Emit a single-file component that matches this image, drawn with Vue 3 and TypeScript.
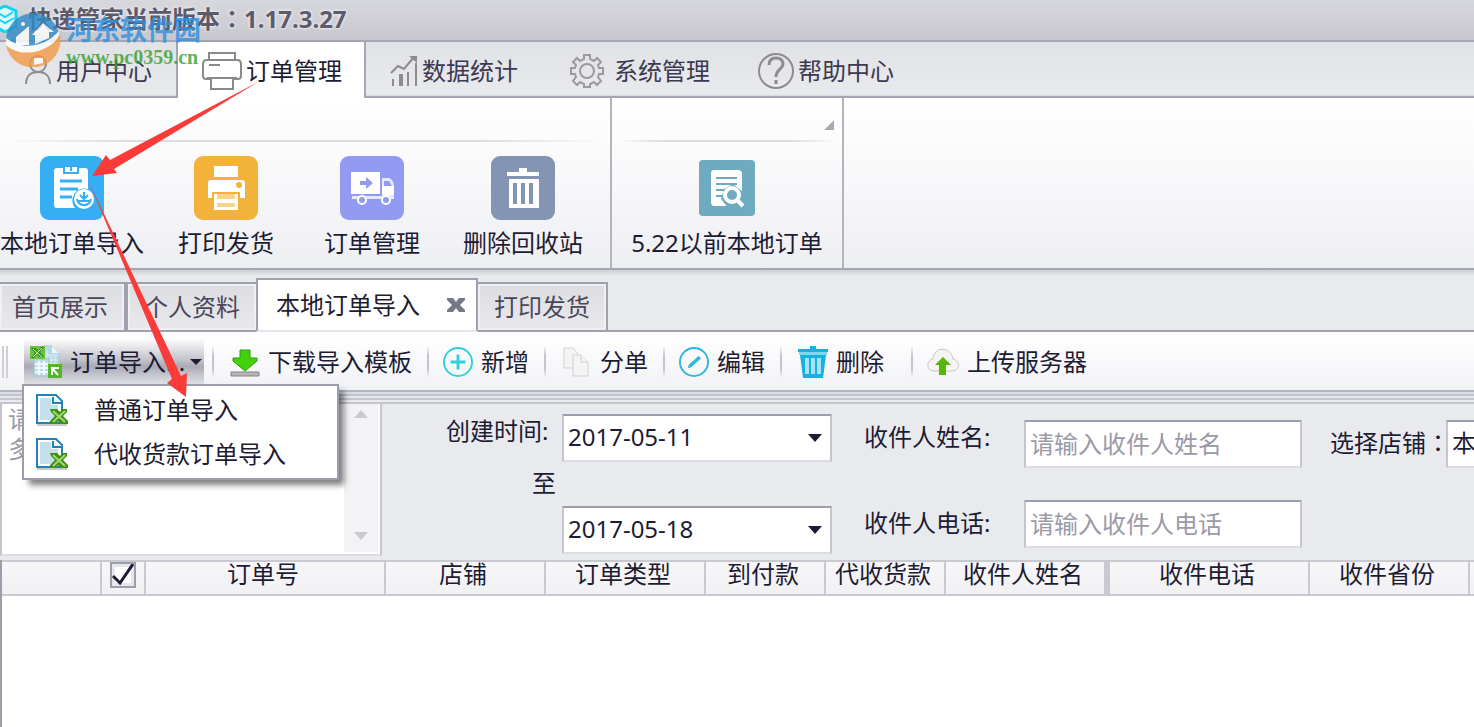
<script setup lang="ts">
import { ref } from 'vue'

interface Column {
  title: string
  cls: string
}

const mainTabs = [
  { id: 'user', label: '用户中心' },
  { id: 'order', label: '订单管理' },
  { id: 'stats', label: '数据统计' },
  { id: 'system', label: '系统管理' },
  { id: 'help', label: '帮助中心' },
]
const activeMain = ref('order')

const columns: Column[] = [
  { title: '订单号', cls: 'w240' },
  { title: '店铺', cls: 'w160' },
  { title: '订单类型', cls: 'w160' },
  { title: '到付款', cls: 'w120' },
  { title: '代收货款', cls: 'w120' },
  { title: '收件人姓名', cls: 'w164' },
  { title: '收件电话', cls: 'w200' },
  { title: '收件省份', cls: 'w160' },
]

const importMenu = ['普通订单导入', '代收货款订单导入']
const startDate = ref('2017-05-11')
const endDate = ref('2017-05-18')
const receiverName = ref('')
const receiverPhone = ref('')
const orderNumbers = ref('')
const allChecked = ref(true)
</script>

<template>
  <div class="app">
    <header class="titlebar">
      <svg class="app-icon" viewBox="0 0 18 28" aria-hidden="true">
        <path d="M-6 6 L5 1 L16 6 L16 21 L5 27 L-6 21Z" fill="#dffaff" stroke="#10d4f4" stroke-width="3" />
        <path d="M-2 8 L5 12 L13 7 M-2 14 L5 18 L14 13" fill="none" stroke="#18d6f2" stroke-width="2" />
      </svg>
      <h1>快递管家当前版本<span class="colon">：</span>1.17.3.27</h1>
    </header>

    <nav class="main-tabs">
      <button
        v-for="tab in mainTabs"
        :key="tab.id"
        type="button"
        :class="['main-tab', tab.id, { active: tab.id === activeMain }]"
        @click="activeMain = tab.id"
      >
        <svg v-if="tab.id === 'user'" class="nav-icon" viewBox="0 0 28 40" width="28" height="40" fill="none" stroke="#8c8c8e" stroke-width="2">
          <circle cx="14" cy="13" r="8" />
          <path d="M2 33 C2 25 7 21 14 21 C21 21 26 25 26 33" />
        </svg>
        <svg v-else-if="tab.id === 'order'" class="nav-icon" viewBox="0 0 40 40" width="40" height="40" fill="none" stroke="#8a8a8a" stroke-width="2">
          <path d="M7 9 V2 H33 V9" />
          <path d="M9 28 H4 C2 28 1 27 1 25 V13 C1 10 2 9 5 9 H35 C38 9 39 10 39 13 V25 C39 27 38 28 36 28 H31" />
          <path d="M5 27 H35 M9 27 V38 H31 V27" />
          <path d="M7 14 H18" />
        </svg>
        <svg v-else-if="tab.id === 'stats'" class="nav-icon" viewBox="0 0 28 40" width="28" height="40" fill="none" stroke="#8c8c8e" stroke-width="2">
          <path d="M3 35 V28 M10 35 V23 M12 35 V23 M18 35 V21 M26 35 V12" />
          <path d="M1 22 L8 15 L14 18 L24 6" />
          <path d="M19 5 H27 V12Z" fill="#8c8c8e" stroke="none" />
        </svg>
        <svg v-else-if="tab.id === 'system'" class="nav-icon" viewBox="0 0 40 40" width="40" height="40" fill="none" stroke="#9b9b9d" stroke-width="2">
          <circle cx="17" cy="20" r="7" />
          <path d="M14 4 H20 V8 L24 10 L27 7 L31 11 L28 14 L29 17 H33 V23 H29 L28 26 L31 30 L27 34 L24 31 L20 33 V36 H14 V33 L10 31 L7 34 L3 30 L6 26 L5 23 H1 V17 H5 L6 14 L3 11 L7 7 L10 10 L14 8Z" />
        </svg>
        <svg v-else class="nav-icon" viewBox="0 0 36 40" width="36" height="40" fill="none" stroke="#8c8c8e" stroke-width="2">
          <circle cx="18" cy="20" r="17" />
          <path d="M11 14 C11 9 14 7 18 7 C22 7 25 9 25 13 C25 18 18 18 18 26" stroke-width="3" />
          <path d="M18 29 V33" stroke-width="3" />
        </svg>
        <span>{{ tab.label }}</span>
      </button>
    </nav>

    <section class="ribbon">
      <div class="group orders">
        <button type="button" class="ribbon-btn">
          <svg viewBox="0 0 64 64" width="64" height="64">
            <rect width="64" height="64" rx="9" fill="#36aef3" />
            <path d="M17 12 H23 V18 H39 V12 H45 Q48 12 48 15 V33 A12 12 0 0 0 35 52 H17 Q14 52 14 49 V15 Q14 12 17 12Z" fill="#fff" />
            <path d="M25 11 H37 V16 H25Z" fill="#fff" />
            <path d="M31 11 V15" stroke="#36aef3" stroke-width="2" />
            <path d="M20 25 H42 M20 33 H38 M20 41 H32" stroke="#36aef3" stroke-width="3" />
            <circle cx="44" cy="43" r="10" fill="#fff" />
            <path d="M44 36 V42 M40 39 L44 43 L48 39 M37 43 Q38 49 44 49 Q50 49 51 43 M37 45 H51" fill="none" stroke="#36aef3" stroke-width="2" />
          </svg>
          <span>本地订单导入</span>
        </button>
        <button type="button" class="ribbon-btn">
          <svg viewBox="0 0 64 64" width="64" height="64">
            <rect width="64" height="64" rx="9" fill="#f3b33b" />
            <path d="M20 10 H44 V21 H20Z M17 24 H48 Q51 24 51 27 V42 H46 V36 H18 V42 H14 V27 Q14 24 17 24Z" fill="#fff" />
            <path d="M20 38 H44 V54 H20Z" fill="#fff" />
            <path d="M23 38 H41 V43 H23Z M23 47 H41 V51 H23Z" fill="#f8d38d" />
            <circle cx="45" cy="29" r="3" fill="#f3b33b" />
          </svg>
          <span>打印发货</span>
        </button>
        <button type="button" class="ribbon-btn">
          <svg viewBox="0 0 64 64" width="64" height="64">
            <rect width="64" height="64" rx="9" fill="#929af2" />
            <path d="M11 16 H40 V38 H11Z" fill="#fff" />
            <path d="M42 22 H49 Q54 24 54 31 V43 H12 V40 H42Z" fill="#e6e8ff" />
            <path d="M42 30 H54 V39 H42Z" fill="#fff" />
            <path d="M44 25 H49 L52 30 H44Z" fill="#929af2" />
            <path d="M20 25 H26 V21 L33 27 L26 33 V29 H20Z" fill="#929af2" />
            <circle cx="22" cy="44" r="4" fill="#929af2" stroke="#fff" stroke-width="2" />
            <circle cx="46" cy="44" r="4" fill="#929af2" stroke="#fff" stroke-width="2" />
          </svg>
          <span>订单管理</span>
        </button>
        <button type="button" class="ribbon-btn">
          <svg viewBox="0 0 64 64" width="64" height="64">
            <rect width="64" height="64" rx="9" fill="#8494b3" />
            <path d="M28 12 H36 V16 H48 V20 H16 V16 H28Z" fill="#fff" />
            <path d="M18 23 H48 V52 H18Z" fill="#fff" />
            <path d="M24 27 V48 M32 27 V48 M40 27 V48" stroke="#8494b3" stroke-width="4" />
          </svg>
          <span>删除回收站</span>
        </button>
      </div>
      <div class="group local">
        <button type="button" class="ribbon-btn">
          <svg viewBox="0 0 64 64" width="64" height="64">
            <rect x="4" y="4" width="56" height="56" rx="4" fill="#6eaac0" />
            <path d="M19 14 H43 Q47 14 47 18 V50 H19 Q16 50 16 46 V17 Q16 14 19 14Z" fill="#fff" />
            <path d="M21 22 H42 M21 28 H42 M21 34 H30 M21 40 H28" stroke="#6eaac0" stroke-width="2" />
            <path d="M47 35 V53 H34 L26 43 L29 33 L38 28Z" fill="#6eaac0" />
            <circle cx="37" cy="39" r="7" fill="#6eaac0" stroke="#fff" stroke-width="4" />
            <path d="M42 44 L48 50" stroke="#fff" stroke-width="4" />
          </svg>
          <span>5.22以前本地订单</span>
        </button>
        <i class="corner"></i>
      </div>
    </section>

    <nav class="doc-tabs">
      <button type="button" class="doc-tab">首页展示</button>
      <button type="button" class="doc-tab">个人资料</button>
      <div class="doc-tab current">
        <button type="button" class="doc-label">本地订单导入</button>
        <button type="button" class="close" aria-label="关闭">
          <svg viewBox="0 0 20 16" width="20" height="16"><path d="M1 1 H7 L10 5 L13 1 H19 V3 L14 8 L19 13 V15 H13 L10 11 L7 15 H1 V13 L6 8 L1 3Z" fill="#77778a" /></svg>
        </button>
      </div>
      <button type="button" class="doc-tab">打印发货</button>
    </nav>

    <div class="toolbar">
      <i class="grip"></i>
      <div class="import">
        <button type="button" class="import-btn" aria-haspopup="menu" aria-expanded="true">
          <svg viewBox="0 0 32 34" width="32" height="34">
            <path d="M13 1 H22 L29 8 V26 H13Z" fill="#b9d8e6" stroke="#a9c7d6" />
            <path d="M22 1 V8 H29Z" fill="#eef7fb" />
            <path d="M17 5 V22 M21 10 V22 M25 10 V22 M14 10 H28 M14 15 H28 M14 19 H28" stroke="#dceef5" />
            <path d="M4 14 H19 V31 H4Z" fill="#bcdce9" stroke="#9fc4d3" />
            <path d="M5 19 H18 M5 23 H18 M5 27 H18 M9 16 V30 M14 16 V30" stroke="#eef8fc" stroke-width="2" />
            <path d="M0 1 H15 V14 H0Z" fill="#6cc043" />
            <path d="M1 3 H6 L8 6 L11 2 H14 L10 7 L14 12 H9 L7 9 L4 13 H1 L5 8Z" fill="#2f8f17" />
            <path d="M3 4 L12 12 M12 3 L3 12" stroke="#d5f0c4" stroke-width="1" />
            <path d="M18 19 H32 V33 H18Z" fill="#52b52c" />
            <path d="M22 30 V23 H29 M22 23 L28 30" fill="none" stroke="#fff" stroke-width="2" />
          </svg>
          <span>订单导入...</span>
          <i class="caret"></i>
        </button>
        <ul class="menu" role="menu">
          <li v-for="item in importMenu" :key="item" role="none">
            <button type="button" role="menuitem">
              <svg viewBox="0 0 32 32" width="32" height="32">
                <path d="M1 1 H20 L26 7 V29 H1Z" fill="#fff" stroke="#2482ba" stroke-width="2" />
                <path d="M4 4 H15 V11 H22 V26 H4Z" fill="#c4e0ec" />
                <path d="M17 3 V9 H25" fill="#e7f4fb" stroke="#2482ba" stroke-width="2" />
                <path d="M1 31 H31" stroke="#c9c9cc" stroke-width="2" />
                <path d="M14 15 H21 L24 18 L26 15 H31 V18 L27 22 L32 27 V30 H25 L22 27 L20 30 H14 V27 L19 22 L15 18Z" fill="#3d9011" />
                <path d="M17 17 L29 28 M29 17 L17 28" stroke="#a4d878" stroke-width="2" />
              </svg>
              <span>{{ item }}</span>
            </button>
          </li>
        </ul>
      </div>
      <i class="sep"></i>
      <button type="button" class="tool">
        <svg viewBox="0 0 30 30" width="30" height="30">
          <path d="M10 3 H20 V11 H27 V14 L15 24 L3 14 V11 H10Z" fill="#42d20c" stroke="#2d9c08" />
          <path d="M1 25 H29 V29 H1Z" fill="#b5b5b5" stroke="#858585" />
        </svg>
        <span>下载导入模板</span>
      </button>
      <i class="sep"></i>
      <button type="button" class="tool">
        <svg viewBox="0 0 32 32" width="30" height="30" fill="none" stroke="#2dd2de">
          <circle cx="16" cy="16" r="15" stroke-width="2" />
          <path d="M16 8 V24 M8 16 H24" stroke-width="3" />
        </svg>
        <span>新增</span>
      </button>
      <i class="sep"></i>
      <button type="button" class="tool wide">
        <svg viewBox="0 0 28 32" width="28" height="32" fill="#f4f4f4" stroke="#d2d2d4" stroke-width="1">
          <path d="M2 2 H11 L16 8 V22 H2Z" />
          <path d="M11 9 H19 L26 16 V30 H11Z" />
          <path d="M19 9 V16 H26" />
        </svg>
        <span>分单</span>
      </button>
      <i class="sep"></i>
      <button type="button" class="tool">
        <svg viewBox="0 0 32 32" width="30" height="30" fill="none" stroke="#2bb5e0">
          <circle cx="16" cy="16" r="15" stroke-width="2" />
          <path d="M10 22 L11 19 L21 10 L23 12 L13 21Z" fill="#2bb5e0" />
        </svg>
        <span>编辑</span>
      </button>
      <i class="sep"></i>
      <button type="button" class="tool delete">
        <svg viewBox="0 0 30 32" width="30" height="32">
          <path d="M12 0 H18 V3 H30 V6 H0 V3 H12Z" fill="#16b1de" />
          <path d="M1 6 H29 V9 H1Z" fill="#7fd6ef" />
          <path d="M2 9 H28 L25 32 H5Z" fill="#16b1de" />
          <path d="M9 12 V28 M15 12 V28 M21 12 V28" stroke="#a5e2f4" stroke-width="4" />
        </svg>
        <span>删除</span>
      </button>
      <i class="sep"></i>
      <button type="button" class="tool">
        <svg viewBox="0 0 32 30" width="32" height="30">
          <path d="M7 24 C-1 24 -1 13 6 12 C7 -1 24 -1 26 12 C34 14 33 24 25 24Z" fill="#f4f4f5" stroke="#c6c6c8" />
          <path d="M16 10 L24 18 H19 V28 H12 V18 H8Z" fill="#57b50b" />
        </svg>
        <span>上传服务器</span>
      </button>
    </div>

    <section class="filters">
      <div class="numbers">
        <textarea v-model="orderNumbers" aria-label="订单号" placeholder="请
多"></textarea>
        <div class="scroll"><i class="up"></i><i class="down"></i></div>
      </div>
      <div class="fields dates">
        <label class="raised" for="from">创建时间:</label>
        <select id="from" v-model="startDate"><option>2017-05-11</option></select>
        <label class="until" for="to">至</label>
        <select id="to" v-model="endDate"><option>2017-05-18</option></select>
      </div>
      <div class="fields receiver">
        <label class="raised" for="name">收件人姓名:</label>
        <input id="name" v-model="receiverName" type="text" placeholder="请输入收件人姓名" />
        <label for="phone">收件人电话:</label>
        <input id="phone" v-model="receiverPhone" type="text" placeholder="请输入收件人电话" />
      </div>
      <div class="fields store">
        <label for="store">选择店铺<span class="colon">：</span></label>
        <select id="store"><option>本</option></select>
      </div>
    </section>

    <main class="grid-area">
      <table>
        <thead>
          <tr>
            <th class="w102"></th>
            <th class="w44"><input v-model="allChecked" type="checkbox" aria-label="全选" /></th>
            <th v-for="col in columns" :key="col.title" :class="col.cls">{{ col.title }}</th>
            <th></th>
          </tr>
        </thead>
      </table>
    </main>

    <div class="watermark" aria-hidden="true">
      <svg viewBox="0 0 56 56" width="56" height="56">
        <path d="M1 30 A27 27 0 0 1 54 22 C44 36 22 40 1 30Z" fill="#2f8cc8" />
        <path d="M1 34 C20 44 44 38 55 24 A27 27 0 0 1 1 34Z" fill="#f39a45" />
        <path d="M11 34 V26 L24 15 V34Z M30 33 V24 H27 L38 12 L49 21 H44 V27Z" fill="#fff" />
        <path d="M1 27 C18 40 40 36 54 20 C57 34 20 52 1 34Z" fill="#fff" />
        <path d="M29 54 V47 H38 V52Z" fill="#fff" />
        <circle cx="18" cy="13" r="2" fill="#fff" />
      </svg>
      <div class="mark-text">
        <span class="mark-name">河东软件园</span>
        <span class="mark-url">www.pc0359.cn</span>
      </div>
    </div>

    <svg class="arrows" viewBox="0 0 300 420" width="300" height="420" aria-hidden="true" fill="#fb3a3a">
      <path d="M258 82 L114 169 L117 173 L92 176 L106 155 L110 160Z" />
      <path d="M88 180 L181 376 L187 373 L186 397 L167 383 L172 379Z" />
    </svg>
  </div>
</template>

<style>
html,
body,
#app {
  height: 100%;
}
body {
  margin: 0;
  overflow: hidden;
}
</style>

<style scoped>
.app {
  position: relative;
  display: flex;
  flex-direction: column;
  min-height: 100%;
  overflow: hidden;
  background: #fff;
  color: #1e1c33;
  font-family: "Noto Sans", "Noto Sans CJK SC", sans-serif;
  font-size: 24px;
  line-height: 32px;
}
* {
  box-sizing: border-box;
}
button,
input,
select,
textarea {
  margin: 0;
  padding: 0;
  border: 0;
  border-radius: 0;
  background: none;
  color: inherit;
  font: inherit;
  white-space: nowrap;
}
svg {
  display: block;
  flex: none;
}
.colon {
  font-family: "Noto Sans CJK TC", sans-serif;
  line-height: 1;
}

.titlebar {
  display: flex;
  align-items: center;
  gap: 10px;
  height: 42px;
  padding-bottom: 2px;
  border-bottom: 2px solid #a5a6b2;
  background: linear-gradient(#d7d8dd, #c7c7ce);
}
.app-icon {
  width: 18px;
  height: 28px;
}
h1 {
  margin: 0;
  color: #5d5a6b;
  font-size: 24px;
  font-weight: 700;
  white-space: nowrap;
  text-shadow: 0 0 3px #eef1f3, 0 0 3px #eef1f3;
}

.main-tabs {
  display: flex;
  height: 56px;
  background: linear-gradient(#e1e2e6, #e9eaee 52px, #d6d7dd 54px, #a5a6b2 54px);
}
.main-tab {
  display: flex;
  align-items: center;
  gap: 4px;
  padding: 2px 24px 0;
  color: #3c3950;
}
.main-tab.stats {
  padding-right: 28px;
}
.main-tab.active {
  padding-right: 22px;
  border: solid #a5a6b2;
  border-width: 0 2px;
  background: #fff;
  color: #1e1c33;
}

.ribbon {
  display: flex;
  height: 172px;
  border-bottom: 2px solid #a3a5af;
  background: linear-gradient(#fff, #fbfbfc 50px, #eeeff3);
}
.group {
  position: relative;
  display: grid;
  align-items: start;
  padding-top: 58px;
  border-right: 2px solid #b3b4be;
}
.group::before {
  position: absolute;
  top: 42px;
  right: 6px;
  left: 6px;
  height: 2px;
  background: linear-gradient(90deg, transparent, #dcdce2 20%, #dcdce2 80%, transparent);
  content: "";
}
.orders {
  grid-template-columns: 144px 164px 128px 174px;
}
.local {
  grid-template-columns: 230px;
}
.ribbon-btn {
  display: flex;
  flex-direction: column;
  align-items: center;
  gap: 7px;
}
.corner {
  position: absolute;
  top: 22px;
  right: 8px;
  border-bottom: 10px solid #aaabb1;
  border-left: 10px solid transparent;
}

.doc-tabs {
  display: flex;
  align-items: flex-end;
  height: 62px;
  background: linear-gradient(transparent 60px, #a0a1af 60px), linear-gradient(#cfd0d5, #e9eaee 6px);
}
.doc-tab {
  display: flex;
  align-items: center;
  height: 50px;
  padding: 0 16px;
  border: 2px solid #a0a1af;
  background: linear-gradient(#dcdde1, #e9e9ed);
  box-shadow: inset 0 0 0 2px #f0f0f3;
  color: #4a475b;
}
.doc-tab:first-child {
  padding-left: 12px;
  border-left: 0;
}
.doc-tab.current {
  gap: 26px;
  height: 54px;
  padding: 0 10px 0 18px;
  border-bottom-color: #e5e6ec;
  background: #fff;
  box-shadow: none;
  color: #1e1c33;
}
.doc-tab.current + .doc-tab {
  border-left: 0;
}
.doc-tab:nth-child(2) {
  border-right: 0;
}

.toolbar {
  display: flex;
  align-items: center;
  height: 58px;
  padding-top: 2px;
  background: linear-gradient(#fff, #f1f2f6);
}
.grip {
  flex: none;
  width: 6px;
  height: 32px;
  margin: 0 16px 0 2px;
  border: solid #cfcfd6;
  border-width: 0 2px;
}
.import {
  position: relative;
  height: 44px;
}
.import-btn {
  display: flex;
  align-items: center;
  height: 44px;
  gap: 8px;
  padding: 0 2px 0 6px;
  background: linear-gradient(#fafafb, #c2c3cb 45%, #a9aab5 60%, #e0e1e6);
}
.import-btn span {
  width: 112px;
  text-align: left;
}
.caret {
  border: solid transparent;
  border-width: 6px 6px 0;
  border-top-color: #1e1c33;
}
.menu {
  position: absolute;
  z-index: 2;
  top: 44px;
  left: -2px;
  width: 317px;
  margin: 0;
  padding: 2px 0;
  border: 2px solid #9c9dac;
  background: #fff;
  box-shadow: 6px 6px 6px -1px rgba(0, 0, 0, 0.5);
  list-style: none;
}
.menu button {
  display: flex;
  align-items: center;
  gap: 26px;
  width: 100%;
  height: 44px;
  padding-left: 12px;
}
.sep {
  flex: none;
  width: 2px;
  height: 32px;
  margin: 0 14px 0 15px;
  background: linear-gradient(transparent, #c4c5cc 30%, #c4c5cc 70%, transparent);
}
.import + .sep {
  margin-left: 8px;
  margin-right: 16px;
}
.tool {
  display: flex;
  align-items: center;
  gap: 8px;
}
.tool.wide {
  gap: 10px;
  padding-left: 2px;
}
.tool.delete {
  padding: 0 12px 0 2px;
}

.filters {
  display: flex;
  align-items: flex-start;
  height: 170px;
  padding-top: 14px;
  overflow: hidden;
  background: linear-gradient(#b4b5bf 2px, #dcdde2 2px 4px, #c2c3cb 4px 6px, #e6e7eb 6px 8px, #c4c5cd 8px 10px, #e9eaee 10px 12px, #c4c5cd 12px 14px, #e9eaee 14px);
}
.numbers {
  display: flex;
  flex: none;
  width: 382px;
  height: 152px;
  border: 2px solid #c4c5cd;
  border-top: 0;
  border-bottom-color: #dcdde2;
  background: #fff;
}
.numbers textarea {
  flex: 1;
  min-width: 0;
  padding: 0 6px;
  outline: 0;
  resize: none;
  overflow: hidden;
  line-height: 30px;
  white-space: pre-wrap;
}
::placeholder {
  color: #9b99a8;
  opacity: 1;
}
.scroll {
  display: flex;
  flex-direction: column;
  align-items: center;
  justify-content: space-between;
  width: 34px;
  margin: 0 2px 2px 0;
  padding: 6px 0 12px;
  background: #f3f3f6;
}
.up,
.down {
  border: solid transparent;
  border-width: 0 7px 8px;
  border-bottom-color: #c9c9d0;
}
.down {
  border-width: 8px 7px 0;
  border-top-color: #c9c9d0;
}
.fields {
  display: grid;
  flex: none;
  align-items: center;
}
.fields label {
  padding-bottom: 2px;
  white-space: nowrap;
}
.fields .raised {
  align-self: start;
  line-height: 34px;
}
.dates {
  grid-template-rows: 48px 44px 48px;
  grid-template-columns: 110px 270px;
  column-gap: 6px;
  margin: 10px 0 0 64px;
}
.dates .until {
  justify-self: end;
}
.dates #to {
  grid-row: 3;
  grid-column: 2;
}
.receiver {
  grid-template-rows: 48px 48px;
  grid-template-columns: 128px 278px;
  gap: 32px;
  margin: 16px 0 0 32px;
}
.store {
  grid-template-columns: 116px 270px;
  margin: 16px 0 0 28px;
}
.fields select,
.fields input {
  width: 100%;
  height: 48px;
  padding: 0 4px 2px;
  border: 2px solid #c4c5cd;
  border-top-color: #9d9eac;
  border-bottom-color: #dcdde2;
  outline: 0;
  background: #fff;
}
.fields select {
  appearance: none;
  background: #fff url("data:image/svg+xml,%3Csvg xmlns='http://www.w3.org/2000/svg' width='14' height='8'%3E%3Cpath d='M0 0H14L7 8Z' fill='%231e1c33'/%3E%3C/svg%3E") no-repeat right 8px center;
}

.grid-area {
  flex: 1;
  overflow: hidden;
  border-left: 2px solid #9d9eac;
  background: #fff;
}
table {
  width: 100%;
  border-spacing: 0;
  table-layout: fixed;
}
th {
  height: 36px;
  padding: 0 4px 8px 0;
  border: solid #c8c9d1;
  border-width: 2px 2px 2px 0;
  background: linear-gradient(#f7f7f9, #f1f1f4);
  font-weight: 400;
  line-height: 24px;
  white-space: nowrap;
}
th:last-child {
  padding: 0;
  border-right: 0;
}
.w102 { width: 100px; }
.w44 { width: 44px; padding: 0; }
.w120 { width: 120px; }
.w160 { width: 160px; }
.w164 { width: 164px; border-right-width: 6px; }
.w200 { width: 200px; }
.w240 { width: 240px; }
th input {
  display: block;
  appearance: none;
  width: 26px;
  height: 26px;
  margin: 0 auto 6px;
  border: 2px solid #9d9eac;
  background: #e8e9ee;
}
th input:checked {
  background: #e6e7ed url("data:image/svg+xml,%3Csvg xmlns='http://www.w3.org/2000/svg' width='22' height='22'%3E%3Cpath d='M3 3H19V19H3Z' fill='%23fff'/%3E%3Cpath d='M1 12L8 19L21 0' fill='none' stroke='%231e1c33' stroke-width='3'/%3E%3C/svg%3E") center;
}

.watermark {
  position: absolute;
  top: 11px;
  left: 5px;
  display: flex;
  gap: 5px;
  opacity: 0.8;
  pointer-events: none;
}
.mark-text {
  display: flex;
  flex-direction: column;
}
.mark-name {
  color: #2f8fe0;
  font-size: 27px;
  font-weight: 700;
  line-height: 38px;
}
.mark-url {
  color: #3a9f35;
  font-family: "Liberation Serif", serif;
  font-size: 20px;
  font-weight: 700;
  line-height: 16px;
}
.arrows {
  position: absolute;
  z-index: 3;
  top: 0;
  left: 0;
  pointer-events: none;
}
</style>
